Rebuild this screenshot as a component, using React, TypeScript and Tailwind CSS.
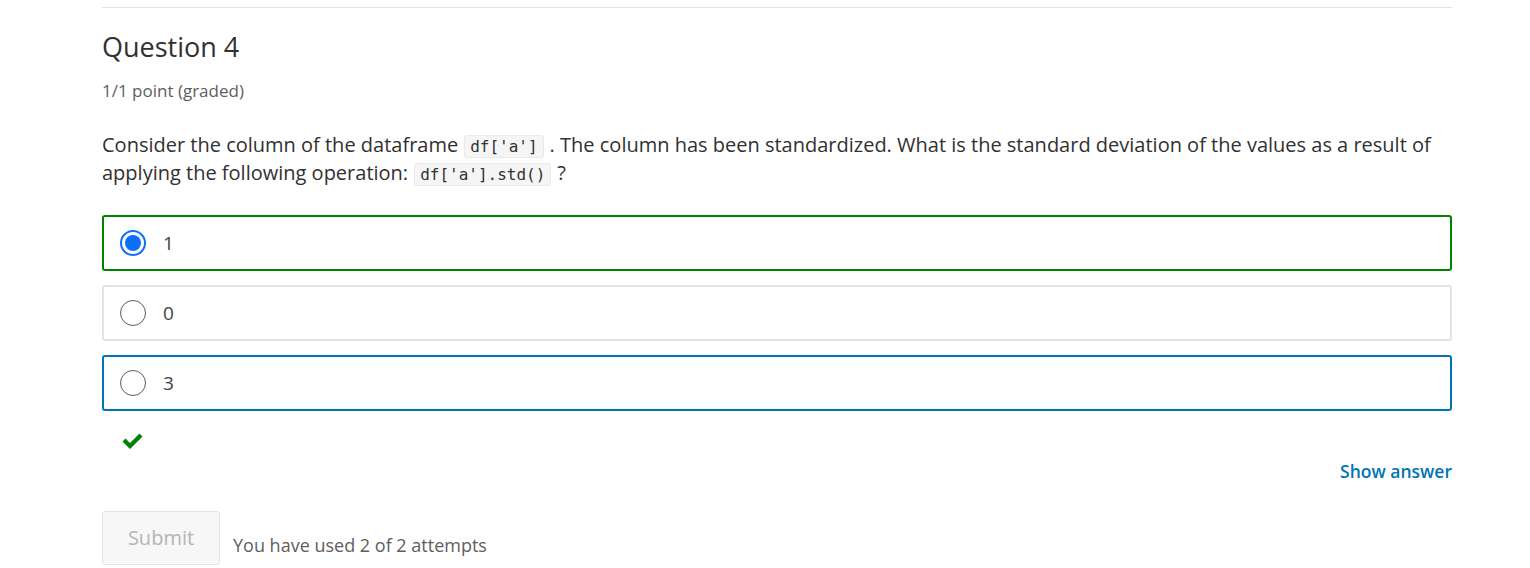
const options = [
  { label: "1", selected: true, border: "border-[#008100]" },
  { label: "0", selected: false, border: "border-[#e3e3e3]" },
  { label: "3", selected: false, border: "border-[#0075b4]" },
];

function Code({ children }: { children: string }) {
  return (
    <code className="mx-[6px] rounded-[3px] border border-[#eaeaea] bg-[#f5f5f5] px-[5px] py-[1px] font-['DejaVu_Sans_Mono',monospace] text-[16px] leading-[18px] text-[#313131]">
      {children}
    </code>
  );
}

function CheckMark() {
  return (
    <svg width="21" height="16" viewBox="0 0 21 16" className="text-[#008100]">
      <path d="M0.5 8.5 L3.5 5.5 L8 10 L17.5 0.5 L20.5 3.5 L8 16 Z" fill="currentColor" />
    </svg>
  );
}

export default function App() {
  return (
    <div className="min-h-screen bg-white font-['Open_Sans',sans-serif]">
      <div className="ml-[102px] w-[1350px] pt-[7px]">
        <div className="h-px bg-[#e2e2e2]" />

        {/* Heading */}
        <h2 className="mt-[21px] text-[27px] leading-[36px] text-[#313131]">Question 4</h2>
        <div className="mt-[14px] text-[17px] leading-[24px] text-[#5e5e5e]">1/1 point (graded)</div>

        {/* Prompt */}
        <p className="mt-[28px] text-[20px] leading-[28px] text-[#313131]">
          Consider the column of the dataframe<Code>df['a']</Code>. The column has been standardized. What is
          the standard deviation of the values as a result of applying the following operation:
          <Code>df['a'].std()</Code>?
        </p>

        {/* Options */}
        <div className="mt-[28px] flex flex-col gap-[14px]">
          {options.map((o) => (
            <label
              key={o.label}
              className={`flex h-[56px] items-center rounded-[3px] border-2 ${o.border} pl-[16px]`}
            >
              {o.selected ? (
                <span className="flex h-[26px] w-[26px] items-center justify-center rounded-full border-2 border-[#0d6efd]">
                  <span className="h-[16px] w-[16px] rounded-full bg-[#0d6efd]" />
                </span>
              ) : (
                <span className="h-[26px] w-[26px] rounded-full border-[1.5px] border-[#5a5a5a]" />
              )}
              <span className="ml-[17px] text-[19px] text-[#414141]">{o.label}</span>
            </label>
          ))}
        </div>

        {/* Result */}
        <div className="mt-[22px] pl-[20px]">
          <CheckMark />
        </div>

        <div className="mt-[9px] flex justify-end">
          <button className="text-[17.5px] leading-[26px] font-semibold text-[#0075b4]">Show answer</button>
        </div>

        {/* Actions */}
        <div className="mt-[27px] flex items-end gap-[13px]">
          <button className="h-[54px] w-[118px] rounded-[3px] border border-[#e5e5e5] bg-[#f7f7f7] text-[20px] text-[#b5b5b5]">
            Submit
          </button>
          <span className="pb-[6px] text-[18px] text-[#5e5e5e]">You have used 2 of 2 attempts</span>
        </div>
      </div>
    </div>
  );
}
